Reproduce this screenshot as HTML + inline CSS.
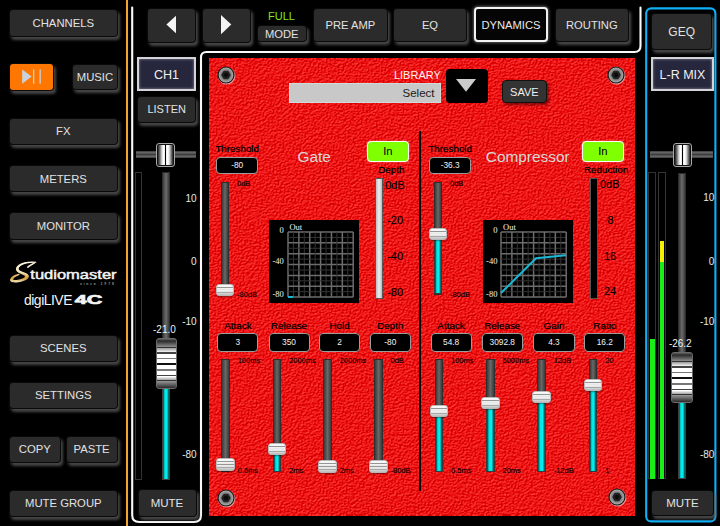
<!DOCTYPE html><html><head><meta charset="utf-8"><style>html,body{margin:0;padding:0;}body{width:720px;height:526px;background:#000;position:relative;overflow:hidden;font-family:"Liberation Sans",sans-serif;}div{box-sizing:border-box;}</style></head><body>
<div style="position:absolute;left:10px;top:10px;width:106.6px;height:25.5px;background:#2b2b2b;border-radius:3px;box-shadow:0 0 0 1px #0a0a0a,2px 3px 3px 1px rgba(95,95,95,0.75);display:flex;align-items:center;justify-content:center;color:#e2e2e2;font-size:11.3px;">CHANNELS</div>
<div style="position:absolute;left:10px;top:64px;width:43.3px;height:25.799999999999997px;background:#ff7700;border-radius:3px;box-shadow:0 0 0 1px #0a0a0a,2px 3px 3px 1px rgba(95,95,95,0.75);"></div>
<svg style="position:absolute;left:0;top:0" width="720" height="526"><polygon points="22.2,69.4 31.6,76.5 22.2,83.7" fill="#c9d2da"/><rect x="33" y="69.4" width="1.3" height="14.3" fill="#c9d2da"/><rect x="39.5" y="69.4" width="1.3" height="14.3" fill="#c9d2da"/></svg>
<div style="position:absolute;left:73.3px;top:64.5px;width:43.3px;height:24.5px;background:#2b2b2b;border-radius:3px;box-shadow:0 0 0 1px #0a0a0a,2px 3px 3px 1px rgba(95,95,95,0.75);display:flex;align-items:center;justify-content:center;color:#e2e2e2;font-size:11.3px;">MUSIC</div>
<div style="position:absolute;left:10px;top:118.8px;width:106.6px;height:25.200000000000003px;background:#2b2b2b;border-radius:3px;box-shadow:0 0 0 1px #0a0a0a,2px 3px 3px 1px rgba(95,95,95,0.75);display:flex;align-items:center;justify-content:center;color:#e2e2e2;font-size:11.3px;">FX</div>
<div style="position:absolute;left:10px;top:165.9px;width:106.6px;height:25.599999999999994px;background:#2b2b2b;border-radius:3px;box-shadow:0 0 0 1px #0a0a0a,2px 3px 3px 1px rgba(95,95,95,0.75);display:flex;align-items:center;justify-content:center;color:#e2e2e2;font-size:11.3px;">METERS</div>
<div style="position:absolute;left:10px;top:213px;width:106.6px;height:25.5px;background:#2b2b2b;border-radius:3px;box-shadow:0 0 0 1px #0a0a0a,2px 3px 3px 1px rgba(95,95,95,0.75);display:flex;align-items:center;justify-content:center;color:#e2e2e2;font-size:11.3px;">MONITOR</div>
<div style="position:absolute;left:10px;top:335.6px;width:106.6px;height:25.399999999999977px;background:#2b2b2b;border-radius:3px;box-shadow:0 0 0 1px #0a0a0a,2px 3px 3px 1px rgba(95,95,95,0.75);display:flex;align-items:center;justify-content:center;color:#e2e2e2;font-size:11.3px;">SCENES</div>
<div style="position:absolute;left:10px;top:382.6px;width:106.6px;height:25.399999999999977px;background:#2b2b2b;border-radius:3px;box-shadow:0 0 0 1px #0a0a0a,2px 3px 3px 1px rgba(95,95,95,0.75);display:flex;align-items:center;justify-content:center;color:#e2e2e2;font-size:11.3px;">SETTINGS</div>
<div style="position:absolute;left:10px;top:436.6px;width:49.5px;height:25.0px;background:#2b2b2b;border-radius:3px;box-shadow:0 0 0 1px #0a0a0a,2px 3px 3px 1px rgba(95,95,95,0.75);display:flex;align-items:center;justify-content:center;color:#e2e2e2;font-size:11.3px;">COPY</div>
<div style="position:absolute;left:66.5px;top:436.6px;width:50.099999999999994px;height:25.0px;background:#2b2b2b;border-radius:3px;box-shadow:0 0 0 1px #0a0a0a,2px 3px 3px 1px rgba(95,95,95,0.75);display:flex;align-items:center;justify-content:center;color:#e2e2e2;font-size:11.3px;">PASTE</div>
<div style="position:absolute;left:10px;top:491px;width:106.6px;height:24.600000000000023px;background:#2b2b2b;border-radius:3px;box-shadow:0 0 0 1px #0a0a0a,2px 3px 3px 1px rgba(95,95,95,0.75);display:flex;align-items:center;justify-content:center;color:#e2e2e2;font-size:11.3px;">MUTE GROUP</div>
<div style="position:absolute;left:125.8px;top:0px;width:2.299999999999997px;height:526px;background:#f5a233;"></div>
<svg style="position:absolute;left:0;top:0" width="130" height="320">
<defs><linearGradient id="gold" x1="0" y1="0" x2="0" y2="1"><stop offset="0" stop-color="#fffbe8"/><stop offset="0.55" stop-color="#f2e2b0"/><stop offset="0.8" stop-color="#d89a30"/><stop offset="1" stop-color="#f4e8c0"/></linearGradient></defs>
<path d="M35.8,262.3 C31,262.2 24,263 20.5,265.3 C17.2,267.5 17.3,270.2 20.5,271.6 C23.5,273 27.5,273.5 28.2,275.6 C29,278.5 24,281.3 17,281.9 C13,282.2 10,281.5 10.6,279.6 C11.3,277.3 14.5,275.3 19,274.4 C15.5,275.8 12.8,277.6 12.6,279.3 C12.5,280.6 15,280.9 18,280.4 C23,279.6 26.2,277.7 25.5,275.9 C24.8,274.3 21,273.5 18.8,272.3 C15.6,270.6 15.6,267.6 19,265.3 C23,262.8 29.5,261.8 35.8,262.3 Z" fill="url(#gold)" stroke="url(#gold)" stroke-width="1.1" stroke-linejoin="round"/>
<path d="M27.2,267.2 C29,265.5 31.5,264 35.2,262.6 C32.5,264.6 30,266 28.2,267.4 Z" fill="#fff4d8" stroke="#fff4d8" stroke-width="0.9" stroke-linejoin="round"/>
<text x="30.3" y="279.4" font-family="Liberation Sans" font-size="12.8" fill="#f4f4f4" stroke="#f4f4f4" stroke-width="0.45" textLength="86.3" lengthAdjust="spacingAndGlyphs">tudiomaster</text>
<text x="80" y="284.5" font-family="Liberation Sans" font-size="3.5" fill="#cfcfcf" textLength="34" lengthAdjust="spacing">since 1978</text>
<text x="24" y="304.5" font-family="Liberation Sans" font-size="14" fill="#f4f4f4" textLength="48" lengthAdjust="spacingAndGlyphs" style="letter-spacing:-0.5px">digiLIVE</text>
<text x="74.8" y="304.4" font-family="Liberation Sans" font-weight="bold" font-size="13" fill="#f4f4f4" stroke="#f4f4f4" stroke-width="0.7" textLength="27.5" lengthAdjust="spacingAndGlyphs">4C</text>
</svg>
<svg style="position:absolute;left:0;top:0" width="720" height="526">
<path d="M132.2,7.5 L132.2,515 Q132.2,522 139.2,522 L194,522 Q201,522 201,515 L201,57.5 Q201,52 206.5,52 L634.5,52 Q640.5,52 640.5,46 L640.5,7.5" stroke="#fafafa" stroke-width="2.1" fill="none" stroke-linecap="round"/>
<rect x="646.2" y="8.4" width="69.2" height="513" rx="5" ry="5" stroke="#10b0f6" stroke-width="2.1" fill="none"/>
</svg>
<div style="position:absolute;left:147.8px;top:8.8px;width:46.89999999999998px;height:32.900000000000006px;background:#2b2b2b;border-radius:3px;box-shadow:0 0 0 1px #0a0a0a,2px 3px 3px 1px rgba(95,95,95,0.75);display:flex;align-items:center;justify-content:center;color:#e2e2e2;font-size:11px;"></div>
<div style="position:absolute;left:203px;top:8.8px;width:47.400000000000006px;height:32.900000000000006px;background:#2b2b2b;border-radius:3px;box-shadow:0 0 0 1px #0a0a0a,2px 3px 3px 1px rgba(95,95,95,0.75);display:flex;align-items:center;justify-content:center;color:#e2e2e2;font-size:11px;"></div>
<svg style="position:absolute;left:0;top:0" width="720" height="60"><polygon points="166.4,24.5 176,15.7 176,33.3" fill="#f4f4f4"/><polygon points="221,15 231.3,24.6 221,34.3" fill="#f4f4f4"/></svg>
<div style="position:absolute;left:181.5px;width:200px;text-align:center;top:10.4px;line-height:13.2px;font-size:11px;color:#7ee81c;white-space:nowrap;font-family:'Liberation Sans',sans-serif;">FULL</div>
<div style="position:absolute;left:258px;top:26px;width:47.5px;height:15px;background:#2b2b2b;border-radius:3px;box-shadow:0 0 0 1px #0a0a0a,2px 3px 3px 1px rgba(95,95,95,0.75);display:flex;align-items:center;justify-content:center;color:#e2e2e2;font-size:11.2px;">MODE</div>
<div style="position:absolute;left:313.8px;top:9.3px;width:73.0px;height:31.999999999999996px;background:#2b2b2b;border-radius:3px;box-shadow:0 0 0 1px #0a0a0a,2px 3px 3px 1px rgba(95,95,95,0.75);display:flex;align-items:center;justify-content:center;color:#e2e2e2;font-size:11.2px;">PRE AMP</div>
<div style="position:absolute;left:394px;top:9.3px;width:72px;height:31.999999999999996px;background:#2b2b2b;border-radius:3px;box-shadow:0 0 0 1px #0a0a0a,2px 3px 3px 1px rgba(95,95,95,0.75);display:flex;align-items:center;justify-content:center;color:#e2e2e2;font-size:11.2px;">EQ</div>
<div style="position:absolute;left:473.6px;top:7.2px;width:74.69999999999993px;height:35.199999999999996px;background:#050505;border:2px solid #f2f2f2;border-radius:4px;box-shadow:0 0 3px 1px rgba(200,200,200,0.45);display:flex;align-items:center;justify-content:center;color:#e8e8e8;font-size:11.2px;">DYNAMICS</div>
<div style="position:absolute;left:555.7px;top:9px;width:72.29999999999995px;height:32px;background:#2b2b2b;border-radius:3px;box-shadow:0 0 0 1px #0a0a0a,2px 3px 3px 1px rgba(95,95,95,0.75);display:flex;align-items:center;justify-content:center;color:#e2e2e2;font-size:11.2px;">ROUTING</div>
<div style="position:absolute;left:652.4px;top:13.6px;width:58.60000000000002px;height:35.1px;background:#2b2b2b;border-radius:3px;box-shadow:0 0 0 1px #0a0a0a,2px 3px 3px 1px rgba(95,95,95,0.75);display:flex;align-items:center;justify-content:center;color:#e2e2e2;font-size:12px;padding-top:1.5px;">GEQ</div>
<div style="position:absolute;left:651px;top:56.8px;width:63px;height:34.60000000000001px;box-sizing:border-box;background:#26263c;border:2px solid #d4d4d8;box-shadow:inset 0 0 3px rgba(220,220,230,0.6);display:flex;align-items:center;justify-content:center;padding-top:2.6px;color:#f0f0f0;font-size:12.5px;">L-R MIX</div>
<div style="position:absolute;left:137px;top:57px;width:59px;height:34.400000000000006px;box-sizing:border-box;background:#26263c;border:2px solid #d4d4d8;box-shadow:inset 0 0 3px rgba(220,220,230,0.6);display:flex;align-items:center;justify-content:center;padding-top:2.6px;color:#f0f0f0;font-size:12.5px;">CH1</div>
<div style="position:absolute;left:138.4px;top:96.5px;width:56.599999999999994px;height:25.5px;background:#2b2b2b;border-radius:3px;box-shadow:0 0 0 1px #0a0a0a,2px 3px 3px 1px rgba(95,95,95,0.75);display:flex;align-items:center;justify-content:center;color:#e2e2e2;font-size:11px;">LISTEN</div>
<div style="position:absolute;left:136px;top:151.2px;width:59.5px;height:7.300000000000011px;background:linear-gradient(#3a3a3a 0%,#6a6a6a 25%,#3c3c3c 50%,#6a6a6a 75%,#3a3a3a 100%);"></div>
<div style="position:absolute;left:156px;top:143px;width:18.599999999999994px;height:23.599999999999994px;border-radius:3px;border:1px solid #a8a8a8;box-shadow:inset 0 0 0 1px #111;background:linear-gradient(90deg,#222 0%,#333 8%,#777 18%,#ddd 30%,#fff 38%,#fff 44%,#000 46%,#000 54%,#fff 56%,#fff 64%,#ddd 72%,#777 84%,#333 92%,#222 100%);"></div>
<div style="position:absolute;left:650px;top:151.2px;width:63.299999999999955px;height:7.300000000000011px;background:linear-gradient(#3a3a3a 0%,#6a6a6a 25%,#3c3c3c 50%,#6a6a6a 75%,#3a3a3a 100%);"></div>
<div style="position:absolute;left:672.7px;top:143px;width:19.299999999999955px;height:23.599999999999994px;border-radius:3px;border:1px solid #a8a8a8;box-shadow:inset 0 0 0 1px #111;background:linear-gradient(90deg,#222 0%,#333 8%,#777 18%,#ddd 30%,#fff 38%,#fff 44%,#000 46%,#000 54%,#fff 56%,#fff 64%,#ddd 72%,#777 84%,#333 92%,#222 100%);"></div>
<div style="position:absolute;left:135.3px;top:172px;width:6.399999999999977px;height:307.6px;border:1px solid #333;background:#000;"></div>
<div style="position:absolute;left:162px;top:172.3px;width:8.199999999999989px;height:307.3px;background:linear-gradient(90deg,#3a3a3a,#6c6c6c 50%,#3a3a3a);border:1px solid #2c2c2c;"></div>
<div style="position:absolute;left:162px;top:389px;width:8.199999999999989px;height:90.60000000000002px;background:linear-gradient(90deg,#003c3c,#00e4e4 30%,#00f0f0 65%,#003c3c);border:1.5px solid #404040;border-top:none;"></div>
<div style="position:absolute;left:155.7px;top:338px;width:21.400000000000006px;height:51.39999999999998px;border-radius:3px;border:1px solid #6a6a6a;background:linear-gradient(#606060 0%,#2a2a2a 4%,#8a8a8a 16%,#333 16%,#333 18.5%,#999 18.5%,#fff 27.5%,#444 27.5%,#444 30%,#fff 30%,#fff 39%,#777 39%,#777 41.5%,#fff 41.5%,#fff 50%,#111 50%,#111 52.5%,#fff 52.5%,#fff 62%,#777 62%,#777 64.5%,#fff 64.5%,#fff 74%,#444 74%,#444 76.5%,#fff 76.5%,#aaa 83%,#333 83%,#333 85.5%,#999 85.5%,#2a2a2a 100%);"></div>
<div style="position:absolute;left:64.4px;width:200px;text-align:center;top:324.4px;line-height:12.0px;font-size:10px;color:#f0f0f0;white-space:nowrap;font-family:'Liberation Sans',sans-serif;">-21.0</div>
<div style="position:absolute;right:523.4px;top:193.0px;line-height:12.0px;font-size:10px;color:#e8e8e8;white-space:nowrap;font-family:'Liberation Sans',sans-serif;">10</div>
<div style="position:absolute;right:523.4px;top:256.0px;line-height:12.0px;font-size:10px;color:#e8e8e8;white-space:nowrap;font-family:'Liberation Sans',sans-serif;">0</div>
<div style="position:absolute;right:523.4px;top:316.4px;line-height:12.0px;font-size:10px;color:#e8e8e8;white-space:nowrap;font-family:'Liberation Sans',sans-serif;">-10</div>
<div style="position:absolute;right:523.4px;top:449.0px;line-height:12.0px;font-size:10px;color:#e8e8e8;white-space:nowrap;font-family:'Liberation Sans',sans-serif;">-80</div>
<div style="position:absolute;left:138.5px;top:490px;width:57.0px;height:26px;background:#2b2b2b;border-radius:3px;box-shadow:0 0 0 1px #0a0a0a,2px 3px 3px 1px rgba(95,95,95,0.75);display:flex;align-items:center;justify-content:center;color:#e2e2e2;font-size:11.5px;">MUTE</div>
<div style="position:absolute;left:648.4px;top:171.8px;width:7.600000000000023px;height:307.2px;border:1px solid #333;background:#000;"></div>
<div style="position:absolute;left:658px;top:171.8px;width:7.600000000000023px;height:307.2px;border:1px solid #333;background:#000;"></div>
<div style="position:absolute;left:649.9px;top:339px;width:4.899999999999977px;height:140px;background:#18ee18;"></div>
<div style="position:absolute;left:659.8px;top:241.3px;width:4.7000000000000455px;height:20.5px;background:#f4f000;"></div>
<div style="position:absolute;left:659.8px;top:261.8px;width:4.7000000000000455px;height:217.2px;background:#18ee18;"></div>
<div style="position:absolute;left:678px;top:172.6px;width:7.5px;height:306.4px;background:linear-gradient(90deg,#3a3a3a,#6c6c6c 50%,#3a3a3a);border:1px solid #2c2c2c;"></div>
<div style="position:absolute;left:678px;top:402px;width:7.5px;height:77px;background:linear-gradient(90deg,#003c3c,#00e4e4 30%,#00f0f0 65%,#003c3c);border:1.5px solid #404040;border-top:none;"></div>
<div style="position:absolute;left:671.4px;top:351.7px;width:21.800000000000068px;height:51.30000000000001px;border-radius:3px;border:1px solid #6a6a6a;background:linear-gradient(#606060 0%,#2a2a2a 4%,#8a8a8a 16%,#333 16%,#333 18.5%,#999 18.5%,#fff 27.5%,#444 27.5%,#444 30%,#fff 30%,#fff 39%,#777 39%,#777 41.5%,#fff 41.5%,#fff 50%,#111 50%,#111 52.5%,#fff 52.5%,#fff 62%,#777 62%,#777 64.5%,#fff 64.5%,#fff 74%,#444 74%,#444 76.5%,#fff 76.5%,#aaa 83%,#333 83%,#333 85.5%,#999 85.5%,#2a2a2a 100%);"></div>
<div style="position:absolute;left:580.3px;width:200px;text-align:center;top:338.0px;line-height:12.0px;font-size:10px;color:#f0f0f0;white-space:nowrap;font-family:'Liberation Sans',sans-serif;">-26.2</div>
<div style="position:absolute;right:5.600000000000023px;top:192.4px;line-height:12.0px;font-size:10px;color:#e8e8e8;white-space:nowrap;font-family:'Liberation Sans',sans-serif;">10</div>
<div style="position:absolute;right:5.600000000000023px;top:256.0px;line-height:12.0px;font-size:10px;color:#e8e8e8;white-space:nowrap;font-family:'Liberation Sans',sans-serif;">0</div>
<div style="position:absolute;right:5.600000000000023px;top:316.0px;line-height:12.0px;font-size:10px;color:#e8e8e8;white-space:nowrap;font-family:'Liberation Sans',sans-serif;">-10</div>
<div style="position:absolute;right:5.600000000000023px;top:449.0px;line-height:12.0px;font-size:10px;color:#e8e8e8;white-space:nowrap;font-family:'Liberation Sans',sans-serif;">-80</div>
<div style="position:absolute;left:652px;top:490.7px;width:61px;height:24.80000000000001px;background:#2b2b2b;border-radius:3px;box-shadow:0 0 0 1px #0a0a0a,2px 3px 3px 1px rgba(95,95,95,0.75);display:flex;align-items:center;justify-content:center;color:#e2e2e2;font-size:11.5px;">MUTE</div>
<svg style="position:absolute;left:208.6px;top:57.8px" width="426.2" height="457.8"><defs><filter id="lt" x="0" y="0" width="100%" height="100%" color-interpolation-filters="sRGB"><feTurbulence type="fractalNoise" baseFrequency="0.6 0.8" numOctaves="3" seed="7" result="n"/><feDiffuseLighting in="n" surfaceScale="1.3" lighting-color="#ffffff" result="l"><feDistantLight azimuth="235" elevation="60"/></feDiffuseLighting><feColorMatrix in="l" type="matrix" values="0.6 0 0 0 0.41  1.1 0 0 0 -0.86  1.1 0 0 0 -0.86  0 0 0 0 1"/></filter></defs><rect x="0" y="0" width="426.2" height="457.8" filter="url(#lt)"/></svg>
<svg style="position:absolute;left:215.9px;top:65.1px" width="20" height="20"><defs><radialGradient id="sg22575"><stop offset="0.5" stop-color="#6c6c6c"/><stop offset="0.95" stop-color="#a6a6a6"/></radialGradient></defs><circle cx="10.6" cy="10.7" r="8.8" fill="#f4d0d0" opacity="0.7"/><circle cx="10" cy="10" r="8.6" fill="#161818"/><circle cx="10" cy="10" r="7.4" fill="url(#sg22575)"/><polygon points="14.4,10 12.2,13.8 7.8,13.8 5.6,10 7.8,6.2 12.2,6.2" fill="#1e1e1e" stroke="#111" stroke-width="0.5"/><polygon points="12.2,10 11.1,11.9 8.9,11.9 7.8,10 8.9,8.1 11.1,8.1" fill="#0a0a0a"/></svg>
<svg style="position:absolute;left:606.2px;top:64.8px" width="20" height="20"><defs><radialGradient id="sg61674"><stop offset="0.5" stop-color="#6c6c6c"/><stop offset="0.95" stop-color="#a6a6a6"/></radialGradient></defs><circle cx="10.6" cy="10.7" r="8.8" fill="#f4d0d0" opacity="0.7"/><circle cx="10" cy="10" r="8.6" fill="#161818"/><circle cx="10" cy="10" r="7.4" fill="url(#sg61674)"/><polygon points="14.4,10 12.2,13.8 7.8,13.8 5.6,10 7.8,6.2 12.2,6.2" fill="#1e1e1e" stroke="#111" stroke-width="0.5"/><polygon points="12.2,10 11.1,11.9 8.9,11.9 7.8,10 8.9,8.1 11.1,8.1" fill="#0a0a0a"/></svg>
<svg style="position:absolute;left:215.7px;top:487.5px" width="20" height="20"><defs><radialGradient id="sg225497"><stop offset="0.5" stop-color="#6c6c6c"/><stop offset="0.95" stop-color="#a6a6a6"/></radialGradient></defs><circle cx="10.6" cy="10.7" r="8.8" fill="#f4d0d0" opacity="0.7"/><circle cx="10" cy="10" r="8.6" fill="#161818"/><circle cx="10" cy="10" r="7.4" fill="url(#sg225497)"/><polygon points="14.4,10 12.2,13.8 7.8,13.8 5.6,10 7.8,6.2 12.2,6.2" fill="#1e1e1e" stroke="#111" stroke-width="0.5"/><polygon points="12.2,10 11.1,11.9 8.9,11.9 7.8,10 8.9,8.1 11.1,8.1" fill="#0a0a0a"/></svg>
<svg style="position:absolute;left:606.5px;top:487.4px" width="20" height="20"><defs><radialGradient id="sg616497"><stop offset="0.5" stop-color="#6c6c6c"/><stop offset="0.95" stop-color="#a6a6a6"/></radialGradient></defs><circle cx="10.6" cy="10.7" r="8.8" fill="#f4d0d0" opacity="0.7"/><circle cx="10" cy="10" r="8.6" fill="#161818"/><circle cx="10" cy="10" r="7.4" fill="url(#sg616497)"/><polygon points="14.4,10 12.2,13.8 7.8,13.8 5.6,10 7.8,6.2 12.2,6.2" fill="#1e1e1e" stroke="#111" stroke-width="0.5"/><polygon points="12.2,10 11.1,11.9 8.9,11.9 7.8,10 8.9,8.1 11.1,8.1" fill="#0a0a0a"/></svg>
<div style="position:absolute;right:279.2px;top:69.2px;line-height:13.2px;font-size:11px;color:#fff0f0;white-space:nowrap;font-family:'Liberation Sans',sans-serif;">LIBRARY</div>
<div style="position:absolute;left:289px;top:82.6px;width:152px;height:20.900000000000006px;background:#c8c8c8;border:1px solid #cfdada;"></div>
<div style="position:absolute;right:285.5px;top:87.3px;line-height:13.799999999999999px;font-size:11.5px;color:#1a1a1a;white-space:nowrap;font-family:'Liberation Sans',sans-serif;">Select</div>
<div style="position:absolute;left:445.5px;top:68.7px;width:42.30000000000001px;height:34.599999999999994px;background:#000;border-radius:4px;"></div>
<svg style="position:absolute;left:0;top:0" width="720" height="120"><polygon points="456,79 476,79 466,91.7" fill="#cccccc"/></svg>
<div style="position:absolute;left:502px;top:80.3px;width:44.700000000000045px;height:23.0px;background:#333;border:1px solid #111;border-radius:4px;box-shadow:2px 2px 3px rgba(60,0,0,0.6);display:flex;align-items:center;justify-content:center;color:#f0f0f0;font-size:11px;">SAVE</div>
<div style="position:absolute;left:419.2px;top:130.7px;width:2.0px;height:360.3px;background:#000;"></div>
<div style="position:absolute;left:137.2px;width:200px;text-align:center;top:142.92000000000002px;line-height:11.76px;font-size:9.8px;color:#000;text-shadow:0 0 0.5px rgba(0,0,0,0.6);white-space:nowrap;font-family:'Liberation Sans',sans-serif;">Threshold</div>
<div style="position:absolute;left:216.4px;top:156.5px;width:41.599999999999994px;height:17.80000000000001px;background:#000;border:1px solid #9c9c9c;border-radius:4px;display:flex;align-items:center;justify-content:center;color:#f4f4f4;font-size:8.3px;">-80</div>
<div style="position:absolute;left:220.6px;top:182px;width:8.400000000000006px;height:112.5px;background:linear-gradient(90deg,#3a3a3a,#686868 50%,#3a3a3a);border:1px solid #2e2e2e;"></div>
<div style="position:absolute;left:215.5px;top:283.90000000000003px;width:18.600000000000023px;height:12.399999999999977px;border-radius:3px;border:1px solid #b8b8b8;background:linear-gradient(#fcfcfc 0%,#f2f2f2 19%,#969696 21%,#969696 27%,#f4f4f4 29%,#e8e8e8 45%,#969696 47%,#969696 53%,#eeeeee 55%,#e2e2e2 70%,#a8a8a8 72%,#a8a8a8 78%,#d8d8d8 80%,#bcbcbc 100%);box-shadow:0 1px 1.5px rgba(0,0,0,0.4);"></div>
<div style="position:absolute;left:237px;top:178.5px;line-height:9.0px;font-size:7.5px;color:#000;text-shadow:0 0 0.4px rgba(0,0,0,0.25);white-space:nowrap;font-family:'Liberation Sans',sans-serif;">0dB</div>
<div style="position:absolute;left:237px;top:289.5px;line-height:9.0px;font-size:7.5px;color:#000;text-shadow:0 0 0.4px rgba(0,0,0,0.25);white-space:nowrap;font-family:'Liberation Sans',sans-serif;">-80dB</div>
<div style="position:absolute;left:214.2px;width:200px;text-align:center;top:148.06px;line-height:18.48px;font-size:15.4px;color:#d8d8d8;white-space:nowrap;font-family:'Liberation Sans',sans-serif;">Gate</div>
<div style="position:absolute;left:366.9px;top:141.1px;width:42.0px;height:20.599999999999994px;background:#80ff00;border:1.7px solid #fbfff8;border-radius:4px;box-shadow:0 0 1.5px rgba(255,255,255,0.6);display:flex;align-items:center;justify-content:center;color:#000;font-size:11.2px;">In</div>
<div style="position:absolute;left:291.3px;width:200px;text-align:center;top:164.12px;line-height:11.76px;font-size:9.8px;color:#000;text-shadow:0 0 0.5px rgba(0,0,0,0.6);white-space:nowrap;font-family:'Liberation Sans',sans-serif;">Depth</div>
<div style="position:absolute;left:375px;top:178px;width:8.199999999999989px;height:120.80000000000001px;background:linear-gradient(90deg,#bbb,#eee 50%,#bbb);border:1px solid #555;"></div>
<div style="position:absolute;left:385.2px;top:178.6px;line-height:13.2px;font-size:11px;color:#000;text-shadow:0 0 0.4px rgba(0,0,0,0.25);white-space:nowrap;font-family:'Liberation Sans',sans-serif;">0dB</div>
<div style="position:absolute;left:387.2px;top:214.1px;line-height:13.2px;font-size:11px;color:#000;text-shadow:0 0 0.4px rgba(0,0,0,0.25);white-space:nowrap;font-family:'Liberation Sans',sans-serif;">-20</div>
<div style="position:absolute;left:387.2px;top:250.1px;line-height:13.2px;font-size:11px;color:#000;text-shadow:0 0 0.4px rgba(0,0,0,0.25);white-space:nowrap;font-family:'Liberation Sans',sans-serif;">-40</div>
<div style="position:absolute;left:387.2px;top:286.09999999999997px;line-height:13.2px;font-size:11px;color:#000;text-shadow:0 0 0.4px rgba(0,0,0,0.25);white-space:nowrap;font-family:'Liberation Sans',sans-serif;">-80</div>
<div style="position:absolute;left:269.1px;top:219.9px;width:90.30000000000001px;height:83.29999999999998px;background:#000;"></div>
<svg style="position:absolute;left:286.6px;top:230.9px" width="67.2" height="67.1"><line x1="1.0" y1="1" x2="1.0" y2="66.1" stroke="#6c6c6c" stroke-width="1.5"/><line x1="1" y1="1.0" x2="66.2" y2="1.0" stroke="#6c6c6c" stroke-width="1.5"/><line x1="6.433333333333334" y1="1" x2="6.433333333333334" y2="66.1" stroke="#333333" stroke-width="1"/><line x1="1" y1="6.425" x2="66.2" y2="6.425" stroke="#333333" stroke-width="1"/><line x1="11.866666666666667" y1="1" x2="11.866666666666667" y2="66.1" stroke="#6c6c6c" stroke-width="1.5"/><line x1="1" y1="11.85" x2="66.2" y2="11.85" stroke="#6c6c6c" stroke-width="1.5"/><line x1="17.3" y1="1" x2="17.3" y2="66.1" stroke="#333333" stroke-width="1"/><line x1="1" y1="17.275" x2="66.2" y2="17.275" stroke="#333333" stroke-width="1"/><line x1="22.733333333333334" y1="1" x2="22.733333333333334" y2="66.1" stroke="#6c6c6c" stroke-width="1.5"/><line x1="1" y1="22.7" x2="66.2" y2="22.7" stroke="#6c6c6c" stroke-width="1.5"/><line x1="28.166666666666668" y1="1" x2="28.166666666666668" y2="66.1" stroke="#333333" stroke-width="1"/><line x1="1" y1="28.125" x2="66.2" y2="28.125" stroke="#333333" stroke-width="1"/><line x1="33.6" y1="1" x2="33.6" y2="66.1" stroke="#6c6c6c" stroke-width="1.5"/><line x1="1" y1="33.55" x2="66.2" y2="33.55" stroke="#6c6c6c" stroke-width="1.5"/><line x1="39.03333333333334" y1="1" x2="39.03333333333334" y2="66.1" stroke="#333333" stroke-width="1"/><line x1="1" y1="38.974999999999994" x2="66.2" y2="38.974999999999994" stroke="#333333" stroke-width="1"/><line x1="44.46666666666667" y1="1" x2="44.46666666666667" y2="66.1" stroke="#6c6c6c" stroke-width="1.5"/><line x1="1" y1="44.4" x2="66.2" y2="44.4" stroke="#6c6c6c" stroke-width="1.5"/><line x1="49.900000000000006" y1="1" x2="49.900000000000006" y2="66.1" stroke="#333333" stroke-width="1"/><line x1="1" y1="49.824999999999996" x2="66.2" y2="49.824999999999996" stroke="#333333" stroke-width="1"/><line x1="55.333333333333336" y1="1" x2="55.333333333333336" y2="66.1" stroke="#6c6c6c" stroke-width="1.5"/><line x1="1" y1="55.25" x2="66.2" y2="55.25" stroke="#6c6c6c" stroke-width="1.5"/><line x1="60.76666666666667" y1="1" x2="60.76666666666667" y2="66.1" stroke="#333333" stroke-width="1"/><line x1="1" y1="60.67499999999999" x2="66.2" y2="60.67499999999999" stroke="#333333" stroke-width="1"/><line x1="66.2" y1="1" x2="66.2" y2="66.1" stroke="#6c6c6c" stroke-width="1.5"/><line x1="1" y1="66.1" x2="66.2" y2="66.1" stroke="#6c6c6c" stroke-width="1.5"/><polyline points="1,66 6,66" stroke="#1ab8d4" stroke-width="2" fill="none"/></svg>
<div style="position:absolute;left:289.40000000000003px;top:221.60000000000002px;line-height:10.2px;font-size:8.5px;color:#f4f4f4;white-space:nowrap;font-family:'Liberation Serif',serif;">Out</div>
<div style="position:absolute;right:436.2px;top:224.5px;line-height:10.2px;font-size:8.5px;color:#f4f4f4;white-space:nowrap;font-family:'Liberation Serif',serif;">0</div>
<div style="position:absolute;right:436.2px;top:256.2px;line-height:10.2px;font-size:8.5px;color:#f4f4f4;white-space:nowrap;font-family:'Liberation Serif',serif;">-40</div>
<div style="position:absolute;right:436.2px;top:288.5px;line-height:10.2px;font-size:8.5px;color:#f4f4f4;white-space:nowrap;font-family:'Liberation Serif',serif;">-80</div>
<div style="position:absolute;left:137.9px;width:200px;text-align:center;top:319.56px;line-height:11.88px;font-size:9.9px;color:#000;text-shadow:0 0 0.5px rgba(0,0,0,0.6);white-space:nowrap;font-family:'Liberation Sans',sans-serif;">Attack</div>
<div style="position:absolute;left:217.3px;top:333.4px;width:41.19999999999999px;height:18.200000000000045px;background:#000;border:1px solid #9c9c9c;border-radius:4px;display:flex;align-items:center;justify-content:center;color:#f4f4f4;font-size:8.3px;">3</div>
<div style="position:absolute;left:221.2px;top:358.6px;width:8.599999999999994px;height:113.0px;background:linear-gradient(90deg,#3a3a3a,#686868 50%,#3a3a3a);border:1px solid #2e2e2e;"></div>
<div style="position:absolute;left:216.2px;top:458.20000000000005px;width:18.600000000000023px;height:12.399999999999977px;border-radius:3px;border:1px solid #b8b8b8;background:linear-gradient(#fcfcfc 0%,#f2f2f2 19%,#969696 21%,#969696 27%,#f4f4f4 29%,#e8e8e8 45%,#969696 47%,#969696 53%,#eeeeee 55%,#e2e2e2 70%,#a8a8a8 72%,#a8a8a8 78%,#d8d8d8 80%,#bcbcbc 100%);box-shadow:0 1px 1.5px rgba(0,0,0,0.4);"></div>
<div style="position:absolute;left:237.7px;top:355.8px;line-height:9.0px;font-size:7.5px;color:#000;text-shadow:0 0 0.4px rgba(0,0,0,0.25);white-space:nowrap;font-family:'Liberation Sans',sans-serif;">100ms</div>
<div style="position:absolute;left:237.7px;top:466.1px;line-height:9.0px;font-size:7.5px;color:#000;text-shadow:0 0 0.4px rgba(0,0,0,0.25);white-space:nowrap;font-family:'Liberation Sans',sans-serif;">0.5ms</div>
<div style="position:absolute;left:189.0px;width:200px;text-align:center;top:319.56px;line-height:11.88px;font-size:9.9px;color:#000;text-shadow:0 0 0.5px rgba(0,0,0,0.6);white-space:nowrap;font-family:'Liberation Sans',sans-serif;">Release</div>
<div style="position:absolute;left:268.5px;top:333.4px;width:41.0px;height:18.200000000000045px;background:#000;border:1px solid #9c9c9c;border-radius:4px;display:flex;align-items:center;justify-content:center;color:#f4f4f4;font-size:8.3px;">350</div>
<div style="position:absolute;left:272.6px;top:358.6px;width:8.600000000000023px;height:113.0px;background:linear-gradient(90deg,#3a3a3a,#686868 50%,#3a3a3a);border:1px solid #2e2e2e;"></div>
<div style="position:absolute;left:272.6px;top:449.4px;width:8.600000000000023px;height:22.200000000000045px;background:linear-gradient(90deg,#003c3c,#00e4e4 30%,#00f0f0 65%,#003c3c);border:1.5px solid #383838;border-top:none;"></div>
<div style="position:absolute;left:267.6px;top:442.8px;width:18.600000000000023px;height:12.399999999999977px;border-radius:3px;border:1px solid #b8b8b8;background:linear-gradient(#fcfcfc 0%,#f2f2f2 19%,#969696 21%,#969696 27%,#f4f4f4 29%,#e8e8e8 45%,#969696 47%,#969696 53%,#eeeeee 55%,#e2e2e2 70%,#a8a8a8 72%,#a8a8a8 78%,#d8d8d8 80%,#bcbcbc 100%);box-shadow:0 1px 1.5px rgba(0,0,0,0.4);"></div>
<div style="position:absolute;left:289.1px;top:355.8px;line-height:9.0px;font-size:7.5px;color:#000;text-shadow:0 0 0.4px rgba(0,0,0,0.25);white-space:nowrap;font-family:'Liberation Sans',sans-serif;">2000ms</div>
<div style="position:absolute;left:289.1px;top:466.1px;line-height:9.0px;font-size:7.5px;color:#000;text-shadow:0 0 0.4px rgba(0,0,0,0.25);white-space:nowrap;font-family:'Liberation Sans',sans-serif;">2ms</div>
<div style="position:absolute;left:239.54999999999995px;width:200px;text-align:center;top:319.56px;line-height:11.88px;font-size:9.9px;color:#000;text-shadow:0 0 0.5px rgba(0,0,0,0.6);white-space:nowrap;font-family:'Liberation Sans',sans-serif;">Hold</div>
<div style="position:absolute;left:318.7px;top:333.4px;width:41.69999999999999px;height:18.200000000000045px;background:#000;border:1px solid #9c9c9c;border-radius:4px;display:flex;align-items:center;justify-content:center;color:#f4f4f4;font-size:8.3px;">2</div>
<div style="position:absolute;left:323.2px;top:358.6px;width:8.600000000000023px;height:113.0px;background:linear-gradient(90deg,#3a3a3a,#686868 50%,#3a3a3a);border:1px solid #2e2e2e;"></div>
<div style="position:absolute;left:318.2px;top:460.40000000000003px;width:18.600000000000023px;height:12.399999999999977px;border-radius:3px;border:1px solid #b8b8b8;background:linear-gradient(#fcfcfc 0%,#f2f2f2 19%,#969696 21%,#969696 27%,#f4f4f4 29%,#e8e8e8 45%,#969696 47%,#969696 53%,#eeeeee 55%,#e2e2e2 70%,#a8a8a8 72%,#a8a8a8 78%,#d8d8d8 80%,#bcbcbc 100%);box-shadow:0 1px 1.5px rgba(0,0,0,0.4);"></div>
<div style="position:absolute;left:339.7px;top:355.8px;line-height:9.0px;font-size:7.5px;color:#000;text-shadow:0 0 0.4px rgba(0,0,0,0.25);white-space:nowrap;font-family:'Liberation Sans',sans-serif;">2000ms</div>
<div style="position:absolute;left:339.7px;top:466.1px;line-height:9.0px;font-size:7.5px;color:#000;text-shadow:0 0 0.4px rgba(0,0,0,0.25);white-space:nowrap;font-family:'Liberation Sans',sans-serif;">2ms</div>
<div style="position:absolute;left:290.35px;width:200px;text-align:center;top:319.56px;line-height:11.88px;font-size:9.9px;color:#000;text-shadow:0 0 0.5px rgba(0,0,0,0.6);white-space:nowrap;font-family:'Liberation Sans',sans-serif;">Depth</div>
<div style="position:absolute;left:369.5px;top:333.4px;width:41.69999999999999px;height:18.200000000000045px;background:#000;border:1px solid #9c9c9c;border-radius:4px;display:flex;align-items:center;justify-content:center;color:#f4f4f4;font-size:8.3px;">-80</div>
<div style="position:absolute;left:374px;top:358.6px;width:8.600000000000023px;height:113.0px;background:linear-gradient(90deg,#3a3a3a,#686868 50%,#3a3a3a);border:1px solid #2e2e2e;"></div>
<div style="position:absolute;left:369.0px;top:460.40000000000003px;width:18.600000000000023px;height:12.399999999999977px;border-radius:3px;border:1px solid #b8b8b8;background:linear-gradient(#fcfcfc 0%,#f2f2f2 19%,#969696 21%,#969696 27%,#f4f4f4 29%,#e8e8e8 45%,#969696 47%,#969696 53%,#eeeeee 55%,#e2e2e2 70%,#a8a8a8 72%,#a8a8a8 78%,#d8d8d8 80%,#bcbcbc 100%);box-shadow:0 1px 1.5px rgba(0,0,0,0.4);"></div>
<div style="position:absolute;left:390.5px;top:355.8px;line-height:9.0px;font-size:7.5px;color:#000;text-shadow:0 0 0.4px rgba(0,0,0,0.25);white-space:nowrap;font-family:'Liberation Sans',sans-serif;">0dB</div>
<div style="position:absolute;left:390.5px;top:466.1px;line-height:9.0px;font-size:7.5px;color:#000;text-shadow:0 0 0.4px rgba(0,0,0,0.25);white-space:nowrap;font-family:'Liberation Sans',sans-serif;">-80dB</div>
<div style="position:absolute;left:350.2px;width:200px;text-align:center;top:142.92000000000002px;line-height:11.76px;font-size:9.8px;color:#000;text-shadow:0 0 0.5px rgba(0,0,0,0.6);white-space:nowrap;font-family:'Liberation Sans',sans-serif;">Threshold</div>
<div style="position:absolute;left:429.4px;top:156.5px;width:41.60000000000002px;height:17.80000000000001px;background:#000;border:1px solid #9c9c9c;border-radius:4px;display:flex;align-items:center;justify-content:center;color:#f4f4f4;font-size:8.3px;">-36.3</div>
<div style="position:absolute;left:433.6px;top:182px;width:8.399999999999977px;height:112.5px;background:linear-gradient(90deg,#3a3a3a,#686868 50%,#3a3a3a);border:1px solid #2e2e2e;"></div>
<div style="position:absolute;left:433.6px;top:234.8px;width:8.399999999999977px;height:59.69999999999999px;background:linear-gradient(90deg,#003c3c,#00e4e4 30%,#00f0f0 65%,#003c3c);border:1.5px solid #383838;border-top:none;"></div>
<div style="position:absolute;left:428.5px;top:228.29999999999998px;width:18.600000000000023px;height:12.200000000000017px;border-radius:3px;border:1px solid #b8b8b8;background:linear-gradient(#fcfcfc 0%,#f2f2f2 19%,#969696 21%,#969696 27%,#f4f4f4 29%,#e8e8e8 45%,#969696 47%,#969696 53%,#eeeeee 55%,#e2e2e2 70%,#a8a8a8 72%,#a8a8a8 78%,#d8d8d8 80%,#bcbcbc 100%);box-shadow:0 1px 1.5px rgba(0,0,0,0.4);"></div>
<div style="position:absolute;left:450px;top:178.5px;line-height:9.0px;font-size:7.5px;color:#000;text-shadow:0 0 0.4px rgba(0,0,0,0.25);white-space:nowrap;font-family:'Liberation Sans',sans-serif;">0dB</div>
<div style="position:absolute;left:450px;top:289.5px;line-height:9.0px;font-size:7.5px;color:#000;text-shadow:0 0 0.4px rgba(0,0,0,0.25);white-space:nowrap;font-family:'Liberation Sans',sans-serif;">-80dB</div>
<div style="position:absolute;left:427.70000000000005px;width:200px;text-align:center;top:148.06px;line-height:18.48px;font-size:15.4px;color:#d8d8d8;white-space:nowrap;font-family:'Liberation Sans',sans-serif;">Compressor</div>
<div style="position:absolute;left:582px;top:141.1px;width:41.799999999999955px;height:20.599999999999994px;background:#80ff00;border:1.7px solid #fbfff8;border-radius:4px;box-shadow:0 0 1.5px rgba(255,255,255,0.6);display:flex;align-items:center;justify-content:center;color:#000;font-size:11.2px;">In</div>
<div style="position:absolute;left:506.04999999999995px;width:200px;text-align:center;top:164.12px;line-height:11.76px;font-size:9.8px;color:#000;text-shadow:0 0 0.5px rgba(0,0,0,0.6);white-space:nowrap;font-family:'Liberation Sans',sans-serif;">Reduction</div>
<div style="position:absolute;left:589.5px;top:178px;width:8.200000000000045px;height:120.80000000000001px;background:#000;border:1px solid #555;"></div>
<div style="position:absolute;left:600px;top:178.20000000000002px;line-height:13.2px;font-size:11px;color:#000;text-shadow:0 0 0.4px rgba(0,0,0,0.25);white-space:nowrap;font-family:'Liberation Sans',sans-serif;">0dB</div>
<div style="position:absolute;left:607.5px;top:214.20000000000002px;line-height:13.2px;font-size:11px;color:#000;text-shadow:0 0 0.4px rgba(0,0,0,0.25);white-space:nowrap;font-family:'Liberation Sans',sans-serif;">8</div>
<div style="position:absolute;left:604px;top:250.1px;line-height:13.2px;font-size:11px;color:#000;text-shadow:0 0 0.4px rgba(0,0,0,0.25);white-space:nowrap;font-family:'Liberation Sans',sans-serif;">16</div>
<div style="position:absolute;left:604px;top:285.4px;line-height:13.2px;font-size:11px;color:#000;text-shadow:0 0 0.4px rgba(0,0,0,0.25);white-space:nowrap;font-family:'Liberation Sans',sans-serif;">24</div>
<div style="position:absolute;left:482.7px;top:219.9px;width:90.30000000000001px;height:83.29999999999998px;background:#000;"></div>
<svg style="position:absolute;left:500.2px;top:230.9px" width="67.2" height="67.1"><line x1="1.0" y1="1" x2="1.0" y2="66.1" stroke="#6c6c6c" stroke-width="1.5"/><line x1="1" y1="1.0" x2="66.2" y2="1.0" stroke="#6c6c6c" stroke-width="1.5"/><line x1="6.433333333333334" y1="1" x2="6.433333333333334" y2="66.1" stroke="#333333" stroke-width="1"/><line x1="1" y1="6.425" x2="66.2" y2="6.425" stroke="#333333" stroke-width="1"/><line x1="11.866666666666667" y1="1" x2="11.866666666666667" y2="66.1" stroke="#6c6c6c" stroke-width="1.5"/><line x1="1" y1="11.85" x2="66.2" y2="11.85" stroke="#6c6c6c" stroke-width="1.5"/><line x1="17.3" y1="1" x2="17.3" y2="66.1" stroke="#333333" stroke-width="1"/><line x1="1" y1="17.275" x2="66.2" y2="17.275" stroke="#333333" stroke-width="1"/><line x1="22.733333333333334" y1="1" x2="22.733333333333334" y2="66.1" stroke="#6c6c6c" stroke-width="1.5"/><line x1="1" y1="22.7" x2="66.2" y2="22.7" stroke="#6c6c6c" stroke-width="1.5"/><line x1="28.166666666666668" y1="1" x2="28.166666666666668" y2="66.1" stroke="#333333" stroke-width="1"/><line x1="1" y1="28.125" x2="66.2" y2="28.125" stroke="#333333" stroke-width="1"/><line x1="33.6" y1="1" x2="33.6" y2="66.1" stroke="#6c6c6c" stroke-width="1.5"/><line x1="1" y1="33.55" x2="66.2" y2="33.55" stroke="#6c6c6c" stroke-width="1.5"/><line x1="39.03333333333334" y1="1" x2="39.03333333333334" y2="66.1" stroke="#333333" stroke-width="1"/><line x1="1" y1="38.974999999999994" x2="66.2" y2="38.974999999999994" stroke="#333333" stroke-width="1"/><line x1="44.46666666666667" y1="1" x2="44.46666666666667" y2="66.1" stroke="#6c6c6c" stroke-width="1.5"/><line x1="1" y1="44.4" x2="66.2" y2="44.4" stroke="#6c6c6c" stroke-width="1.5"/><line x1="49.900000000000006" y1="1" x2="49.900000000000006" y2="66.1" stroke="#333333" stroke-width="1"/><line x1="1" y1="49.824999999999996" x2="66.2" y2="49.824999999999996" stroke="#333333" stroke-width="1"/><line x1="55.333333333333336" y1="1" x2="55.333333333333336" y2="66.1" stroke="#6c6c6c" stroke-width="1.5"/><line x1="1" y1="55.25" x2="66.2" y2="55.25" stroke="#6c6c6c" stroke-width="1.5"/><line x1="60.76666666666667" y1="1" x2="60.76666666666667" y2="66.1" stroke="#333333" stroke-width="1"/><line x1="1" y1="60.67499999999999" x2="66.2" y2="60.67499999999999" stroke="#333333" stroke-width="1"/><line x1="66.2" y1="1" x2="66.2" y2="66.1" stroke="#6c6c6c" stroke-width="1.5"/><line x1="1" y1="66.1" x2="66.2" y2="66.1" stroke="#6c6c6c" stroke-width="1.5"/><polyline points="1,62 36,27.2 66,24.2" stroke="#1ab8d4" stroke-width="2" fill="none"/></svg>
<div style="position:absolute;left:503.0px;top:221.60000000000002px;line-height:10.2px;font-size:8.5px;color:#f4f4f4;white-space:nowrap;font-family:'Liberation Serif',serif;">Out</div>
<div style="position:absolute;right:222.60000000000002px;top:224.5px;line-height:10.2px;font-size:8.5px;color:#f4f4f4;white-space:nowrap;font-family:'Liberation Serif',serif;">0</div>
<div style="position:absolute;right:222.60000000000002px;top:256.2px;line-height:10.2px;font-size:8.5px;color:#f4f4f4;white-space:nowrap;font-family:'Liberation Serif',serif;">-40</div>
<div style="position:absolute;right:222.60000000000002px;top:288.5px;line-height:10.2px;font-size:8.5px;color:#f4f4f4;white-space:nowrap;font-family:'Liberation Serif',serif;">-80</div>
<div style="position:absolute;left:351.1px;width:200px;text-align:center;top:319.56px;line-height:11.88px;font-size:9.9px;color:#000;text-shadow:0 0 0.5px rgba(0,0,0,0.6);white-space:nowrap;font-family:'Liberation Sans',sans-serif;">Attack</div>
<div style="position:absolute;left:430.6px;top:333.4px;width:41.0px;height:18.200000000000045px;background:#000;border:1px solid #9c9c9c;border-radius:4px;display:flex;align-items:center;justify-content:center;color:#f4f4f4;font-size:8.3px;">54.8</div>
<div style="position:absolute;left:434.5px;top:358.6px;width:8.600000000000023px;height:113.0px;background:linear-gradient(90deg,#3a3a3a,#686868 50%,#3a3a3a);border:1px solid #2e2e2e;"></div>
<div style="position:absolute;left:434.5px;top:411.2px;width:8.600000000000023px;height:60.400000000000034px;background:linear-gradient(90deg,#003c3c,#00e4e4 30%,#00f0f0 65%,#003c3c);border:1.5px solid #383838;border-top:none;"></div>
<div style="position:absolute;left:429.5px;top:404.6px;width:18.600000000000023px;height:12.399999999999977px;border-radius:3px;border:1px solid #b8b8b8;background:linear-gradient(#fcfcfc 0%,#f2f2f2 19%,#969696 21%,#969696 27%,#f4f4f4 29%,#e8e8e8 45%,#969696 47%,#969696 53%,#eeeeee 55%,#e2e2e2 70%,#a8a8a8 72%,#a8a8a8 78%,#d8d8d8 80%,#bcbcbc 100%);box-shadow:0 1px 1.5px rgba(0,0,0,0.4);"></div>
<div style="position:absolute;left:451.0px;top:355.8px;line-height:9.0px;font-size:7.5px;color:#000;text-shadow:0 0 0.4px rgba(0,0,0,0.25);white-space:nowrap;font-family:'Liberation Sans',sans-serif;">100ms</div>
<div style="position:absolute;left:451.0px;top:466.1px;line-height:9.0px;font-size:7.5px;color:#000;text-shadow:0 0 0.4px rgba(0,0,0,0.25);white-space:nowrap;font-family:'Liberation Sans',sans-serif;">0.5ms</div>
<div style="position:absolute;left:402.25px;width:200px;text-align:center;top:319.56px;line-height:11.88px;font-size:9.9px;color:#000;text-shadow:0 0 0.5px rgba(0,0,0,0.6);white-space:nowrap;font-family:'Liberation Sans',sans-serif;">Release</div>
<div style="position:absolute;left:481.8px;top:333.4px;width:40.900000000000034px;height:18.200000000000045px;background:#000;border:1px solid #9c9c9c;border-radius:4px;display:flex;align-items:center;justify-content:center;color:#f4f4f4;font-size:8.3px;">3092.8</div>
<div style="position:absolute;left:486px;top:358.6px;width:8.600000000000023px;height:113.0px;background:linear-gradient(90deg,#3a3a3a,#686868 50%,#3a3a3a);border:1px solid #2e2e2e;"></div>
<div style="position:absolute;left:486px;top:403.7px;width:8.600000000000023px;height:67.90000000000003px;background:linear-gradient(90deg,#003c3c,#00e4e4 30%,#00f0f0 65%,#003c3c);border:1.5px solid #383838;border-top:none;"></div>
<div style="position:absolute;left:481.0px;top:397.1px;width:18.600000000000023px;height:12.399999999999977px;border-radius:3px;border:1px solid #b8b8b8;background:linear-gradient(#fcfcfc 0%,#f2f2f2 19%,#969696 21%,#969696 27%,#f4f4f4 29%,#e8e8e8 45%,#969696 47%,#969696 53%,#eeeeee 55%,#e2e2e2 70%,#a8a8a8 72%,#a8a8a8 78%,#d8d8d8 80%,#bcbcbc 100%);box-shadow:0 1px 1.5px rgba(0,0,0,0.4);"></div>
<div style="position:absolute;left:502.5px;top:355.8px;line-height:9.0px;font-size:7.5px;color:#000;text-shadow:0 0 0.4px rgba(0,0,0,0.25);white-space:nowrap;font-family:'Liberation Sans',sans-serif;">5000ms</div>
<div style="position:absolute;left:502.5px;top:466.1px;line-height:9.0px;font-size:7.5px;color:#000;text-shadow:0 0 0.4px rgba(0,0,0,0.25);white-space:nowrap;font-family:'Liberation Sans',sans-serif;">20ms</div>
<div style="position:absolute;left:454.0px;width:200px;text-align:center;top:319.56px;line-height:11.88px;font-size:9.9px;color:#000;text-shadow:0 0 0.5px rgba(0,0,0,0.6);white-space:nowrap;font-family:'Liberation Sans',sans-serif;">Gain</div>
<div style="position:absolute;left:533.4px;top:333.4px;width:41.200000000000045px;height:18.200000000000045px;background:#000;border:1px solid #9c9c9c;border-radius:4px;display:flex;align-items:center;justify-content:center;color:#f4f4f4;font-size:8.3px;">4.3</div>
<div style="position:absolute;left:537.2px;top:358.6px;width:8.600000000000023px;height:113.0px;background:linear-gradient(90deg,#3a3a3a,#686868 50%,#3a3a3a);border:1px solid #2e2e2e;"></div>
<div style="position:absolute;left:537.2px;top:397.7px;width:8.600000000000023px;height:73.90000000000003px;background:linear-gradient(90deg,#003c3c,#00e4e4 30%,#00f0f0 65%,#003c3c);border:1.5px solid #383838;border-top:none;"></div>
<div style="position:absolute;left:532.2px;top:391.1px;width:18.59999999999991px;height:12.399999999999977px;border-radius:3px;border:1px solid #b8b8b8;background:linear-gradient(#fcfcfc 0%,#f2f2f2 19%,#969696 21%,#969696 27%,#f4f4f4 29%,#e8e8e8 45%,#969696 47%,#969696 53%,#eeeeee 55%,#e2e2e2 70%,#a8a8a8 72%,#a8a8a8 78%,#d8d8d8 80%,#bcbcbc 100%);box-shadow:0 1px 1.5px rgba(0,0,0,0.4);"></div>
<div style="position:absolute;left:553.7px;top:355.8px;line-height:9.0px;font-size:7.5px;color:#000;text-shadow:0 0 0.4px rgba(0,0,0,0.25);white-space:nowrap;font-family:'Liberation Sans',sans-serif;">12dB</div>
<div style="position:absolute;left:553.7px;top:466.1px;line-height:9.0px;font-size:7.5px;color:#000;text-shadow:0 0 0.4px rgba(0,0,0,0.25);white-space:nowrap;font-family:'Liberation Sans',sans-serif;">-12dB</div>
<div style="position:absolute;left:504.85px;width:200px;text-align:center;top:319.56px;line-height:11.88px;font-size:9.9px;color:#000;text-shadow:0 0 0.5px rgba(0,0,0,0.6);white-space:nowrap;font-family:'Liberation Sans',sans-serif;">Ratio</div>
<div style="position:absolute;left:584.2px;top:333.4px;width:41.299999999999955px;height:18.200000000000045px;background:#000;border:1px solid #9c9c9c;border-radius:4px;display:flex;align-items:center;justify-content:center;color:#f4f4f4;font-size:8.3px;">16.2</div>
<div style="position:absolute;left:588.8px;top:358.6px;width:8.600000000000023px;height:113.0px;background:linear-gradient(90deg,#3a3a3a,#686868 50%,#3a3a3a);border:1px solid #2e2e2e;"></div>
<div style="position:absolute;left:588.8px;top:385.09999999999997px;width:8.600000000000023px;height:86.50000000000006px;background:linear-gradient(90deg,#003c3c,#00e4e4 30%,#00f0f0 65%,#003c3c);border:1.5px solid #383838;border-top:none;"></div>
<div style="position:absolute;left:583.8px;top:378.5px;width:18.59999999999991px;height:12.399999999999977px;border-radius:3px;border:1px solid #b8b8b8;background:linear-gradient(#fcfcfc 0%,#f2f2f2 19%,#969696 21%,#969696 27%,#f4f4f4 29%,#e8e8e8 45%,#969696 47%,#969696 53%,#eeeeee 55%,#e2e2e2 70%,#a8a8a8 72%,#a8a8a8 78%,#d8d8d8 80%,#bcbcbc 100%);box-shadow:0 1px 1.5px rgba(0,0,0,0.4);"></div>
<div style="position:absolute;left:605.3px;top:355.8px;line-height:9.0px;font-size:7.5px;color:#000;text-shadow:0 0 0.4px rgba(0,0,0,0.25);white-space:nowrap;font-family:'Liberation Sans',sans-serif;">20</div>
<div style="position:absolute;left:605.3px;top:466.1px;line-height:9.0px;font-size:7.5px;color:#000;text-shadow:0 0 0.4px rgba(0,0,0,0.25);white-space:nowrap;font-family:'Liberation Sans',sans-serif;">1</div>
</body></html>
